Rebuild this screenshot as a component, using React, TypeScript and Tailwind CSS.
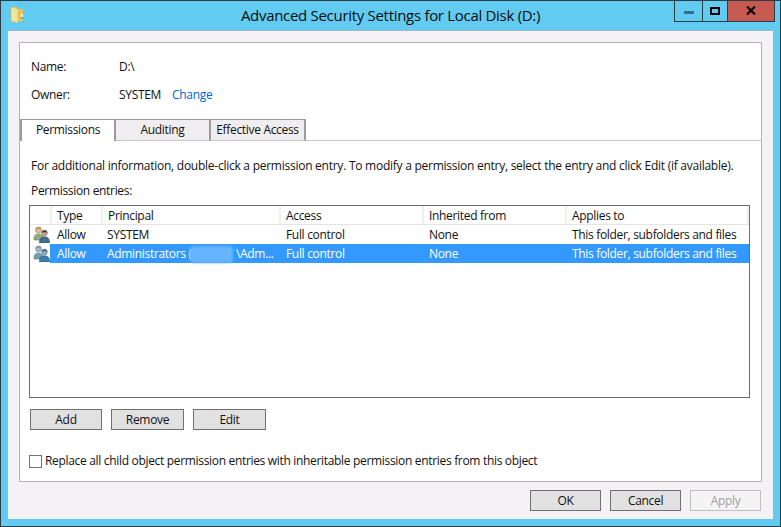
import React from "react";

const columns = [
  { label: "Type", width: "w-[51px]", pad: "pl-[5px]" },
  { label: "Principal", width: "w-[178px]", pad: "pl-[5px]" },
  { label: "Access", width: "w-[143px]", pad: "pl-[5px]" },
  { label: "Inherited from", width: "w-[143px]", pad: "pl-[5px]" },
  { label: "Applies to", width: "flex-1", pad: "pl-[5px]" },
];

function FolderIcon() {
  return (
    <svg width="14" height="18" viewBox="0 0 14 18" className="block">
      <path d="M1 1h6l1 2h5v12H1z" fill="#e8c659" />
      <path d="M1 1l7 2v14l-7-2z" fill="#f6e3a0" stroke="#d9b850" strokeWidth="0.6" />
      <rect x="11" y="8" width="2" height="5" fill="#f3f3e8" />
      <rect x="11" y="11" width="2" height="2" fill="#4fa3d8" />
    </svg>
  );
}

function UsersIcon({ selected }: { selected?: boolean }) {
  const backBody = selected ? "#6f9fbe" : "#8fae7c";
  const backHead = selected ? "#9fbcd4" : "#dcbf98";
  const backHair = selected ? "#7d9cb4" : "#b59a5a";
  const frontHead = selected ? "#8fb2cc" : "#d4a583";
  const frontHair = selected ? "#3f6f92" : "#4a3f38";
  return (
    <svg width="17" height="17" viewBox="0 0 17 17" className="block">
      <path d="M1 13c0-3.5 1.8-5 4.5-5s4.5 1.5 4.5 5v1H1z" fill={backBody} stroke="#5e7a5c" strokeWidth="0.6" />
      <circle cx="5.5" cy="4" r="3" fill={backHead} stroke="#8d8560" strokeWidth="0.6" />
      <path d="M2.6 3.6C2.8 1.8 4 1 5.5 1s2.7 0.8 2.9 2.6C7 2.8 4 2.8 2.6 3.6z" fill={backHair} />
      <path d="M6.5 16c0-3.5 2-5.2 5-5.2s5 1.7 5 5.2v1h-10z" fill={selected ? "#3f7fae" : "#3f6f8f"} stroke="#2f4f63" strokeWidth="0.6" />
      <circle cx="11.5" cy="7" r="2.8" fill={frontHead} stroke="#4d4a48" strokeWidth="0.5" />
      <path d="M8.7 6.8C8.8 5 10 4.2 11.5 4.2s2.7 0.8 2.8 2.6C13 6 10 6 8.7 6.8z" fill={frontHair} />
    </svg>
  );
}

function Row({ selected }: { selected?: boolean }) {
  const text = selected ? "text-white" : "text-[#111]";
  return (
    <div className="flex h-[19px] items-center">
      <div className="flex w-[20px] justify-center pl-[3px]">
        <UsersIcon selected={selected} />
      </div>
      <div className={`flex h-full flex-1 items-center ${selected ? "bg-[#3399ff]" : ""} ${text}`}>
        <div className="w-[53px] pl-[7px]">Allow</div>
        <div className="relative w-[177px] pl-[4px] whitespace-nowrap">
          {selected ? (
            <>
              Administrators (
              <span className="absolute top-[1px] left-[87px] h-[17px] w-[43px] rounded-sm bg-[#66b3ff] blur-[1px]" />
              <span className="absolute left-[133px]">\Adm...</span>
            </>
          ) : (
            "SYSTEM"
          )}
        </div>
        <div className="w-[143px] pl-[6px]">Full control</div>
        <div className="w-[143px] pl-[6px]">None</div>
        <div className="flex-1 pl-[6px] whitespace-nowrap">This folder, subfolders and files</div>
      </div>
    </div>
  );
}

function Button({ label, className = "" }: { label: string; className?: string }) {
  return (
    <button className={`flex h-[21px] items-center justify-center border border-[#707070] bg-[#e1e1e1] text-[#111] ${className}`}>
      {label}
    </button>
  );
}

export default function App() {
  return (
    <div
      className="flex h-[527px] w-[781px] flex-col overflow-hidden border border-[#2f3e46] bg-[#62cbf1] text-[12px] tracking-[-0.32px] text-[#111]"
      style={{ fontFamily: '"Open Sans", "Noto Sans", sans-serif' }}
    >
      <div className="relative flex h-[29px] shrink-0 items-center justify-center">
        <div className="absolute top-[5px] left-[9px]">
          <FolderIcon />
        </div>
        <span className="mb-[1px] text-[15px] tracking-[-0.3px] text-[#0c0c0c]">
          Advanced Security Settings for Local Disk (D:)
        </span>
        <div className="absolute top-[-1px] right-[5px] flex h-[22px] border border-t-0 border-[#2f3e46]">
          <div className="flex w-[28px] items-center justify-center border-r border-[#2f3e46]">
            <div className="mt-[4px] h-[3px] w-[10px] bg-[#2f6f8a]" />
          </div>
          <div className="flex w-[25px] items-center justify-center border-r border-[#2f3e46]">
            <div className="h-[8px] w-[10px] border-2 border-black" />
          </div>
          <div className="flex w-[46px] items-center justify-center bg-[#c75a50]">
            <svg width="10" height="9" viewBox="0 0 10 9">
              <path d="M1 0.5L9 8.5M9 0.5L1 8.5" stroke="#0b0b0b" strokeWidth="2.2" />
            </svg>
          </div>
        </div>
      </div>

      <div className="mx-[7px] flex flex-1 flex-col border-t border-[#9fb6c4] bg-[#f5f2f6] px-[11px] pt-[11px]">
        <div className="flex h-[440px] flex-col border border-[#b4b4b4] bg-white">
          <div className="flex h-[13px] shrink-0" />
          <div className="flex h-[22px] items-center pl-[11px]">
            <div className="w-[88px]">Name:</div>
            <div>D:\</div>
          </div>
          <div className="mt-[6px] flex h-[22px] items-center pl-[11px]">
            <div className="w-[88px]">Owner:</div>
            <div>SYSTEM</div>
            <div className="ml-[11px] text-[#0066cc]">Change</div>
          </div>

          <div className="mt-[13px] flex h-[22px] shrink-0 items-stretch">
            <div className="flex w-[96px] items-center justify-center border-t border-r-2 border-l-2 border-[#9b9b9b] bg-white pb-[1px]">
              Permissions
            </div>
            <div className="flex w-[95px] items-center justify-center border-t border-r-2 border-b border-[#9b9b9b] border-b-[#c8c8c8] bg-[#f0edf0]">
              Auditing
            </div>
            <div className="flex w-[95px] items-center justify-center border-t border-r-2 border-b border-[#9b9b9b] border-b-[#c8c8c8] bg-[#f0edf0]">
              Effective Access
            </div>
            <div className="flex-1 border-b border-[#c8c8c8]" />
          </div>

          <div className="flex flex-1 flex-col pr-[11px] pl-[9px]">
            <p className="mt-[16px] ml-[2px] leading-[17px] tracking-[-0.255px] whitespace-nowrap">
              For additional information, double-click a permission entry. To modify a permission entry, select the entry and click Edit (if available).
            </p>
            <p className="mt-[8px] ml-[2px] leading-[17px]">Permission entries:</p>

            <div className="mt-[6px] h-[193px] border border-[#6b6b6b] bg-white">
              <div className="flex h-[19px] items-center border-b border-[#e5e5e5]">
                <div className="h-full w-[22px] border-r-2 border-[#efefef]" />
                {columns.map((col) => (
                  <div
                    key={col.label}
                    className={`flex h-full items-center border-r-2 border-[#efefef] pt-[1px] ${col.pad} ${col.width}`}
                  >
                    {col.label}
                  </div>
                ))}
              </div>
              <Row />
              <Row selected />
            </div>

            <div className="mt-[11px] ml-[1px] flex gap-[9px]">
              <Button label="Add" className="w-[72px]" />
              <Button label="Remove" className="w-[73px]" />
              <Button label="Edit" className="w-[73px]" />
            </div>

            <label className="mt-[22px] flex items-center gap-[3px]">
              <span className="h-[13px] w-[13px] border border-[#707070] bg-white" />
              Replace all child object permission entries with inheritable permission entries from this object
            </label>
          </div>
        </div>

        <div className="mt-[8px] flex justify-end gap-[9px] pr-[1px]">
          <Button label="OK" className="w-[71px] border-[#2b7cc0]" />
          <Button label="Cancel" className="w-[71px]" />
          <button className="flex h-[21px] w-[71px] items-center justify-center border border-[#bfbfbf] bg-[#f4f4f4] text-[#a0a0a0]">
            Apply
          </button>
        </div>
      </div>
      <div className="h-[7px] shrink-0" />
    </div>
  );
}
